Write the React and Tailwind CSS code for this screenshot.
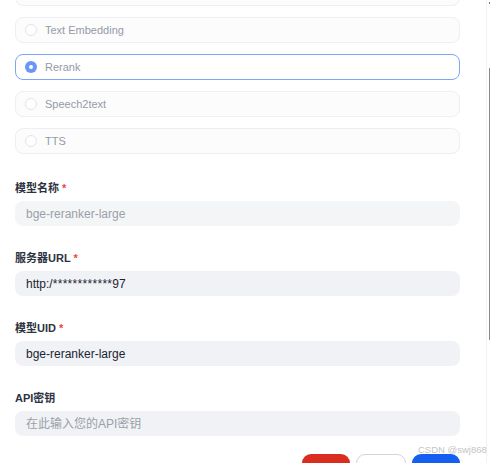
import React from "react";

const font = { fontFamily: '"Liberation Sans", Arial, "Noto Sans CJK SC", sans-serif' };

function RadioCard({ label, selected }) {
  return (
    <div
      className={
        "flex h-[26px] items-center rounded-[8px] border pl-[9px] " +
        (selected ? "border-[#7ea5f8] bg-white" : "border-[#eeeff2] bg-[#fcfcfd]")
      }
    >
      {selected ? (
        <span className="flex h-[12px] w-[12px] items-center justify-center rounded-full bg-[#6a97f6]">
          <span className="h-[4px] w-[4px] rounded-full bg-white" />
        </span>
      ) : (
        <span className="h-[12px] w-[12px] rounded-full border border-[#e3e4e8] bg-white" />
      )}
      <span className="ml-[8px] text-[11px] leading-none text-[#959aa5]">{label}</span>
    </div>
  );
}

function Field({ label, required, children, muted, bg }) {
  return (
    <div className="flex flex-col">
      <div className="flex h-[16px] items-center text-[11px] font-bold text-[#2d3340]">
        {label}
        {required && <span className="ml-[3px] text-[#f04438]">*</span>}
      </div>
      <div
        className={
          "mt-[5px] flex h-[25px] items-center rounded-[8px] pl-[11px] text-[12px] " +
          bg +
          (muted ? " text-[#9aa0aa]" : " text-[#1d2433]")
        }
      >
        {children}
      </div>
    </div>
  );
}

export default function App() {
  return (
    <div className="relative flex h-[463px] w-[490px] overflow-hidden bg-white" style={font}>
      <div className="flex w-[486px] flex-col pl-[15px] pr-[26px]">
        <div className="mt-[-20px] flex flex-col gap-[11px]">
          <div className="h-[26px] rounded-[8px] border border-[#eeeff2] bg-[#fcfcfd]" />
          <RadioCard label="Text Embedding" />
          <RadioCard label="Rerank" selected />
          <RadioCard label="Speech2text" />
          <RadioCard label="TTS" />
        </div>
        <div className="mt-[26px] flex flex-col gap-[24px]">
          <Field label="模型名称" required muted bg="bg-[#f4f5f7]">bge-reranker-large</Field>
          <Field label="服务器URL" required bg="bg-[#f0f2f5]">
            http:/<span className="tracking-[0.3px]">************</span>97
          </Field>
          <Field label="模型UID" required bg="bg-[#f0f2f5]">bge-reranker-large</Field>
          <Field label="API密钥" muted bg="bg-[#f0f2f5]">在此输入您的API密钥</Field>
        </div>
        <div className="mt-[18px] flex justify-end gap-[6px]">
          <div className="h-[32px] w-[48px] rounded-[9px] bg-[#d92d20]" />
          <div className="h-[32px] w-[50px] rounded-[9px] border border-[#d0d5dd] bg-white" />
          <div className="h-[32px] w-[48px] rounded-[9px] bg-[#155eef]" />
        </div>
      </div>
      <div className="flex w-[4px] flex-col border-l border-[#f2f2f2]">
        <div className="ml-[2px] mt-[2px] h-[2px] w-[1px] bg-[#777]" />
        <div className="ml-[2px] mt-[64px] h-[272px] w-[1px] bg-[#8a8a8a]" />
      </div>
      <div className="absolute left-[418px] top-[443px] text-[9.5px] text-[#c4c4c4]">CSDN @swj868</div>
    </div>
  );
}
